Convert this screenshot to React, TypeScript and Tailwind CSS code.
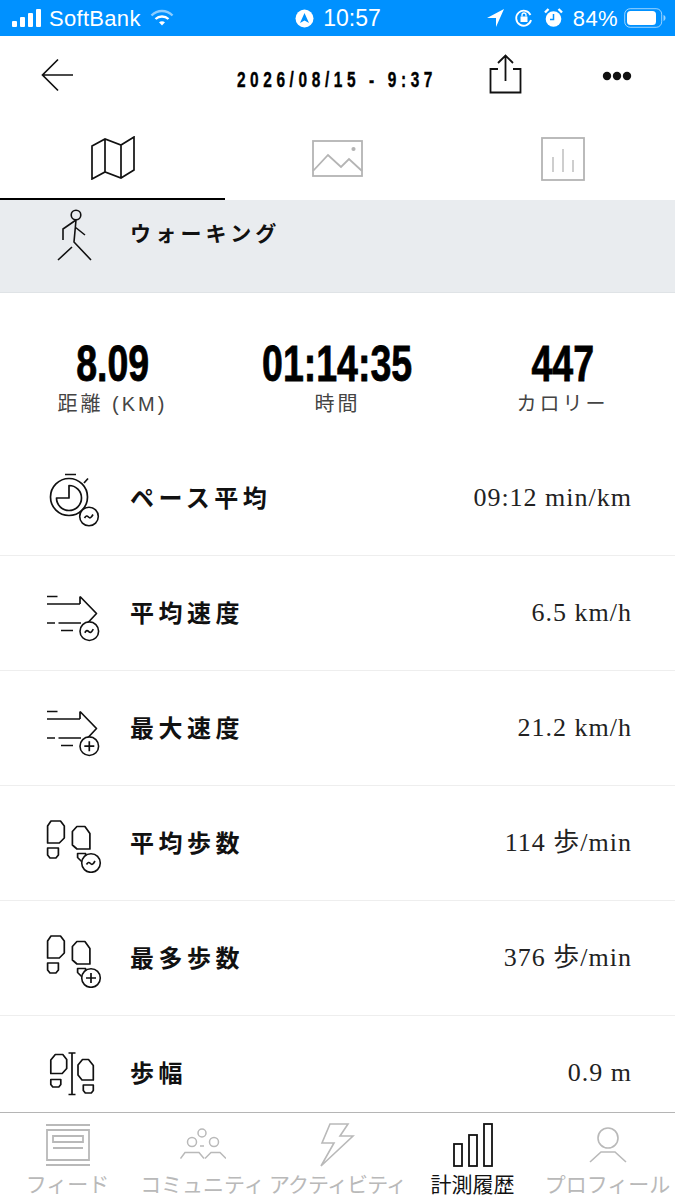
import React from "react";

const sans = "font-['Noto_Sans_CJK_JP','Liberation_Sans',sans-serif]";
const heavy = "font-['Liberation_Sans',sans-serif]";
const statLabel = "font-['Liberation_Sans','Noto_Sans_CJK_JP',sans-serif]";

const Badge = ({ x, y, plus }: { x: number; y: number; plus?: boolean }) => (
  <g>
    <circle cx={x} cy={y} r="9.3" fill="#fff" stroke="#111" strokeWidth="1.6" />
    {plus ? (
      <path d={`M${x - 5} ${y}h10M${x} ${y - 5}v10`} stroke="#111" strokeWidth="1.7" fill="none" />
    ) : (
      <path
        d={`M${x - 4.5} ${y + 1.5}c1.500 -2.500 2.500 -2.500 4 -1s2.500 1 4.500 -2.500`}
        stroke="#111"
        strokeWidth="1.7"
        fill="none"
      />
    )}
  </g>
);

const IconBox = ({ children }: { children: React.ReactNode }) => (
  <svg
    width="60"
    height="60"
    viewBox="0 0 60 60"
    fill="none"
    stroke="#111"
    strokeWidth="1.7"
    strokeLinejoin="round"
  >
    {children}
  </svg>
);

const StopwatchIcon = () => (
  <IconBox>
    <path d="M21 6.500h11M40 15l4 -4.500" />
    <circle cx="25" cy="29" r="18.500" />
    <path d="M25 17.500a12.500 12.500 0 1 1 -12.500 12.500h12.500z" />
    <Badge x={45} y={48.5} />
  </IconBox>
);

const SpeedIcon = ({ plus }: { plus?: boolean }) => (
  <IconBox>
    <path d="M3 13.500h10.500M3 21h33M36 13.500v7.500M36 13.500l16.500 17L38 46M3 40h8M14.500 40H37M17 47.500h12" />
    <Badge x={45.3} y={48.2} plus={plus} />
  </IconBox>
);

const FeetIcon = ({ plus }: { plus?: boolean }) => (
  <IconBox>
    <path d="M7 8h9.500l3.800 5v12l-5 5H3.600V13zM3.600 35h10.800v7l-2.500 3H6l-2.400 -3zM28.400 18.500l4.500 -5h8l5 7V36H33l-4.600 -4zM33.600 40.500h8v8h-4l-4 -4z" />
    <Badge x={47} y={50} plus={plus} />
  </IconBox>
);

const StrideIcon = () => (
  <IconBox>
    <path d="M24.500 10h7M28 10v41.500M24.500 51.500h7" />
    <path d="M6.800 17l4.500 -5.500h7.500l3.900 5v9l-4.500 5H6.800zM6.800 36.500h10v5l-2 2.500h-6l-2 -2.500zM34 22l4.500 -5.500h6l4.800 6V37H38l-4 -5zM39.300 42h10v5.500l-2 2.500h-6l-2 -2.500z" />
  </IconBox>
);

const WalkerIcon = () => (
  <svg width="44" height="58" viewBox="0 0 44 58" fill="none" stroke="#111" strokeWidth="1.6">
    <circle cx="20" cy="6" r="4.800" />
    <path d="M20 11L18 33L35 51M16 38L2 51M20 11L7 20V31M19 18L29 26" />
  </svg>
);

const rows = [
  { icon: <StopwatchIcon />, label: "ペース平均", value: "09:12 min/km" },
  { icon: <SpeedIcon />, label: "平均速度", value: "6.5 km/h" },
  { icon: <SpeedIcon plus />, label: "最大速度", value: "21.2 km/h" },
  { icon: <FeetIcon />, label: "平均歩数", value: "114 歩/min" },
  { icon: <FeetIcon plus />, label: "最多歩数", value: "376 歩/min" },
  { icon: <StrideIcon />, label: "歩幅", value: "0.9 m" },
];

const stats = [
  { value: "8.09", label: "距離 (KM)" },
  { value: "01:14:35", label: "時間" },
  { value: "447", label: "カロリー" },
];

const StatusBar = () => (
  <div className="flex h-9 items-center justify-between bg-[#0091ff] pl-[12px] pr-[9px] text-[22px] text-white font-['Liberation_Sans',sans-serif]">
    <div className="flex w-[220px] items-center">
      <svg width="30" height="20" viewBox="0 0 30 20" fill="#fff">
        <rect x="0" y="13" width="5" height="6" rx="1" />
        <rect x="8" y="9" width="5" height="10" rx="1" />
        <rect x="16" y="5" width="5" height="14" rx="1" />
        <rect x="24" y="1" width="5" height="18" rx="1" />
      </svg>
      <span className="ml-[7px] tracking-[0.3px]">SoftBank</span>
      <svg className="ml-[9px]" width="24" height="18" viewBox="0 0 24 18" fill="none" stroke="#fff">
        <path d="M1.500 6.500c6 -6 15 -6 21 0" strokeWidth="2.400" opacity="0.55" />
        <path d="M5.500 10c3.600 -3.400 9.400 -3.400 13 0" strokeWidth="2.400" />
        <path d="M9 13.200l3 3.300 3 -3.300c-1.800 -1.400 -4.200 -1.400 -6 0z" fill="#fff" stroke="none" />
      </svg>
    </div>
    <div className="-ml-[32px] flex items-center gap-[9px] text-[23px]">
      <svg width="19" height="19" viewBox="0 0 19 19">
        <circle cx="9.500" cy="9.500" r="9" fill="#fff" />
        <path d="M9.500 4L14 14l-4.500 -2.500L5 14z" fill="#0091ff" />
      </svg>
      <span>10:57</span>
    </div>
    <div className="flex w-[190px] items-center justify-end gap-[10px]">
      <svg width="17" height="18" viewBox="0 0 17 18" fill="#fff">
        <path d="M17 0L9 18V9H0z" />
      </svg>
      <svg width="20" height="20" viewBox="0 0 20 20" fill="none" stroke="#fff" strokeWidth="1.800">
        <path d="M17 12a7.500 7.500 0 1 1 -.5 -5" />
        <rect x="6.500" y="8.500" width="7" height="5.500" fill="#fff" stroke="none" />
        <path d="M8 8.500V7a2 2 0 0 1 4 0v1.500" strokeWidth="1.300" />
      </svg>
      <svg width="19" height="20" viewBox="0 0 19 20">
        <circle cx="9.500" cy="11" r="7.800" fill="#fff" />
        <path d="M9.500 6v5.500H6" stroke="#0091ff" strokeWidth="1.500" fill="none" />
        <path d="M1 4.500L4.500 1M18 4.500L14.500 1" stroke="#fff" strokeWidth="2.400" />
      </svg>
      <span className="text-[22px] tracking-[0.4px]">84%</span>
      <svg className="-ml-[4px]" width="42" height="20" viewBox="0 0 42 20" fill="none">
        <rect x="0.700" y="0.700" width="37" height="18.600" rx="5.500" stroke="#fff" opacity="0.6" />
        <rect x="3" y="3" width="29" height="14" rx="3.500" fill="#fff" />
        <path d="M39.500 7v6c1.300 -.4 2 -1.600 2 -3s-.7 -2.600 -2 -3z" fill="#fff" opacity="0.6" />
      </svg>
    </div>
  </div>
);

const Header = () => (
  <div className="flex h-[84px] items-center pl-[41px]">
    <svg className="-mt-[7px]" width="33" height="34" viewBox="0 0 33 34" fill="none" stroke="#111" strokeWidth="1.700">
      <path d="M32 17H2M17 1.500L1.500 17 17 32.500" />
    </svg>
    <div className="ml-[163px] mt-[4px] flex w-[200px] justify-center">
      <span
        className={`inline-block shrink-0 scale-x-[0.7] whitespace-nowrap text-[22px] font-bold leading-[26px] tracking-[6.600px] text-black [-webkit-text-stroke:0.4px_#000] ${heavy}`}
      >
        2026/08/15 - 9:37
      </span>
    </div>
    <svg className="ml-[52px] -mt-[8px]" width="33" height="40" viewBox="0 0 33 40" fill="none" stroke="#111" strokeWidth="1.800">
      <path d="M9 15H1.500v23.500h30V15H24M16.500 27V2M9 9l7.500-7.500L24 9" />
    </svg>
    <svg className="ml-[80px] -mt-[4px]" width="30" height="10" viewBox="0 0 30 10" fill="#111">
      <circle cx="5" cy="5" r="4.200" />
      <circle cx="15" cy="5" r="4.200" />
      <circle cx="25" cy="5" r="4.200" />
    </svg>
  </div>
);

const TopTabs = () => (
  <div className="grid h-[80px] grid-cols-3">
    <div className="flex items-center justify-center border-b-2 border-black pb-[3px]">
      <svg width="44" height="44" viewBox="0 0 44 44" fill="none" stroke="#111" strokeWidth="1.700">
        <path d="M1 10l13 -7 16 6 13 -8v33l-13 8-16-6-13 7zM14 3v33M30 9v33" />
      </svg>
    </div>
    <div className="flex items-center justify-center pb-[3px]">
      <svg width="51" height="37" viewBox="0 0 51 37" fill="none" stroke="#b4b4b4" strokeWidth="1.800">
        <rect x="1" y="1" width="49" height="35" />
        <path d="M1 31l15-16 13 12 8-8 13 12" />
        <circle cx="41.500" cy="9" r="1.200" fill="#b4b4b4" />
      </svg>
    </div>
    <div className="flex items-center justify-center pb-[3px]">
      <svg width="44" height="44" viewBox="0 0 44 44" fill="none" stroke="#b4b4b4" strokeWidth="1.800">
        <rect x="1" y="1" width="42" height="42" />
        <path d="M12 20v15M22 12v23M32 23v12" strokeWidth="1.300" />
      </svg>
    </div>
  </div>
);

const BottomTabs = () => {
  const items = [
    {
      label: "フィード",
      className: "text-[#b9b9b9]",
      icon: (
        <svg width="44" height="42" viewBox="0 0 44 42" fill="none" stroke="#b9b9b9" strokeWidth="1.800">
          <path d="M0 1h44M0 41h44M1 6h42v30H1zM7 12h30v6H7zM7 24h30" />
        </svg>
      ),
    },
    {
      label: "コミュニティ",
      className: "text-[#b9b9b9]",
      icon: (
        <svg width="46" height="34" viewBox="0 0 46 34" fill="none" stroke="#b9b9b9" strokeWidth="1.500">
          <circle cx="22" cy="5" r="4" />
          <circle cx="12" cy="14" r="4.500" />
          <circle cx="34" cy="14" r="4.500" />
          <path d="M20 18h4M0.500 30.500L5 24.500h14l5 6M25 30.500L31 24.500h9l6 6" />
        </svg>
      ),
    },
    {
      label: "アクティビティ",
      className: "tracking-[-0.9px] text-[#b9b9b9]",
      icon: (
        <svg width="35" height="44" viewBox="0 0 35 44" fill="none" stroke="#b9b9b9" strokeWidth="1.600">
          <path d="M10 1h18l-8 12h13L1 43l13-23H2z" />
        </svg>
      ),
    },
    {
      label: "計測履歴",
      className: "text-[#111]",
      icon: (
        <svg width="40" height="44" viewBox="0 0 40 44" fill="none" stroke="#111" strokeWidth="1.800">
          <rect x="1" y="21" width="8" height="22" />
          <rect x="16" y="12" width="8" height="31" />
          <rect x="31" y="1" width="8" height="42" />
        </svg>
      ),
    },
    {
      label: "プロフィール",
      className: "text-[#b9b9b9]",
      icon: (
        <svg width="38" height="36" viewBox="0 0 38 36" fill="none" stroke="#b9b9b9" strokeWidth="1.600">
          <circle cx="19" cy="11" r="10" />
          <path d="M1 35l11-10h14l11 10" />
        </svg>
      ),
    },
  ];

  return (
    <div className="grid h-[88px] shrink-0 grid-cols-5 border-t border-[#b5b5b5] bg-white">
      {items.map((item) => (
        <div key={item.label} className="flex flex-col items-center">
          <div className="flex h-[55px] w-full items-center justify-center pt-[8px]">{item.icon}</div>
          <span className={`whitespace-nowrap text-[21px] leading-[30px] ${sans} ${item.className}`}>{item.label}</span>
        </div>
      ))}
    </div>
  );
};

const App = () => {
  return (
    <div className="flex h-[1200px] w-[675px] flex-col overflow-hidden bg-white">
      <StatusBar />
      <Header />
      <TopTabs />

      <div className="flex-1 overflow-hidden">
        <div className="flex h-[93px] items-start border-b border-[#dfe3e6] bg-[#e9ecef]">
          <div className="ml-[56px] mt-[9px]">
            <WalkerIcon />
          </div>
          <span className={`ml-[30px] mt-[14px] text-[21px] font-bold leading-[36px] tracking-[4.200px] text-[#111] ${sans}`}>
            ウォーキング
          </span>
        </div>

        <div className="grid h-[148px] grid-cols-3 pt-[46px]">
          {stats.map((stat) => (
            <div key={stat.label} className="flex flex-col items-center">
              <span
                className={`inline-block scale-x-[0.75] text-[50px] font-bold leading-[50px] text-black [-webkit-text-stroke:0.8px_#000] ${heavy}`}
              >
                {stat.value}
              </span>
              <span className={`mt-[3px] text-[20px] leading-[24px] tracking-[3px] text-[#444] ${statLabel}`}>
                {stat.label}
              </span>
            </div>
          ))}
        </div>

        {rows.map((row) => (
          <div key={row.label} className="flex h-[115px] items-center border-b border-[#eeeeee] pl-[44px] pr-[43px]">
            {row.icon}
            <span className={`mb-[2px] ml-[26px] text-[24px] font-bold tracking-[4.500px] text-[#111] ${sans}`}>
              {row.label}
            </span>
            <span className="mb-[2px] ml-auto text-[26px] tracking-[1px] text-[#222] font-['Liberation_Serif','Noto_Sans_CJK_JP',serif]">
              {row.value}
            </span>
          </div>
        ))}
      </div>

      <BottomTabs />
    </div>
  );
};

export default App;
